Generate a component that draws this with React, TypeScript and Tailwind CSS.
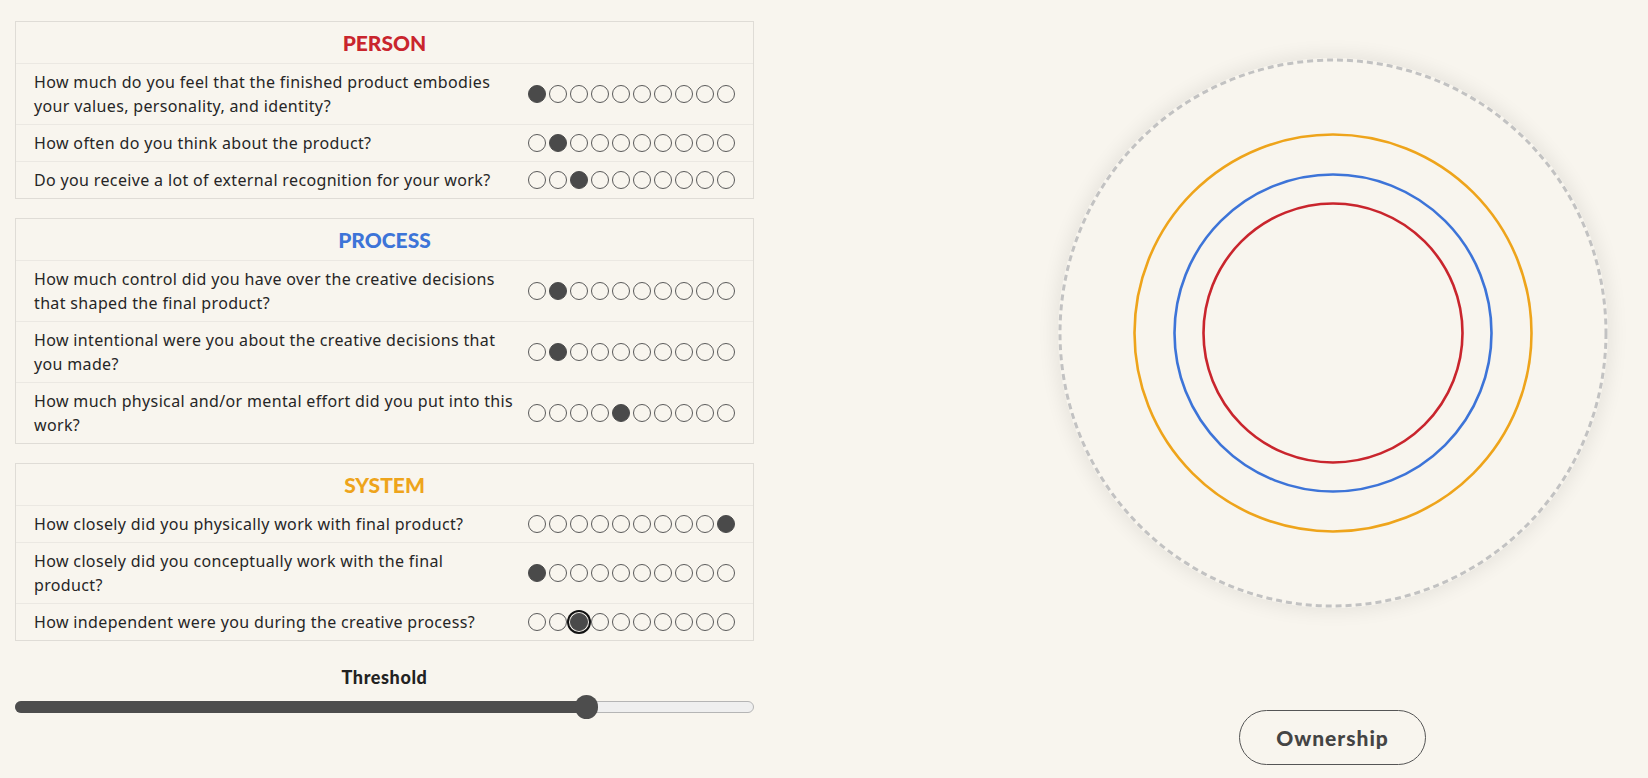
import React from "react";

type Question = { text: string; value: number; focused?: boolean };
type Section = { title: string; color: string; questions: Question[] };

const sections: Section[] = [
  {
    title: "PERSON",
    color: "text-[#c9252d]",
    questions: [
      {
        text: "How much do you feel that the finished product embodies your values, personality, and identity?",
        value: 1,
      },
      { text: "How often do you think about the product?", value: 2 },
      { text: "Do you receive a lot of external recognition for your work?", value: 3 },
    ],
  },
  {
    title: "PROCESS",
    color: "text-[#3d74d8]",
    questions: [
      {
        text: "How much control did you have over the creative decisions that shaped the final product?",
        value: 2,
      },
      { text: "How intentional were you about the creative decisions that you made?", value: 2 },
      { text: "How much physical and/or mental effort did you put into this work?", value: 5 },
    ],
  },
  {
    title: "SYSTEM",
    color: "text-[#eea41b]",
    questions: [
      { text: "How closely did you physically work with final product?", value: 10 },
      { text: "How closely did you conceptually work with the final product?", value: 1 },
      { text: "How independent were you during the creative process?", value: 3, focused: true },
    ],
  },
];

const Scale = ({ value, focused }: { value: number; focused?: boolean }) => (
  <div className="flex gap-[3px] shrink-0">
    {Array.from({ length: 10 }, (_, i) => {
      const on = i + 1 === value;
      return (
        <span
          key={i}
          className={
            on
              ? focused
                ? "w-[18px] h-[18px] rounded-full bg-[#4a4a4a] border border-[#4a4a4a] shadow-[0_0_0_1px_#f5f2ec,0_0_0_3px_#111]"
                : "w-[18px] h-[18px] rounded-full bg-[#4a4a4a] border border-[#4a4a4a]"
              : "w-[18px] h-[18px] rounded-full border-[1.3px] border-[#5a5a5a]"
          }
        />
      );
    })}
  </div>
);

const SectionCard = ({ section }: { section: Section }) => (
  <div className="border border-[#dfdcd6] bg-[#f8f5ee]">
    <div
      className={`text-center font-black text-[21px] leading-[27px] py-[7px] border-b border-[#ebe8e2] ${section.color}`}
    >
      {section.title}
    </div>
    {section.questions.map((q, i) => (
      <div
        key={i}
        className={`flex items-center px-[18px] py-[6px] ${i < 2 ? "border-b border-[#ebe8e2]" : ""}`}
      >
        <p className="w-[480px] font-['Noto_Sans',sans-serif] text-[16px] leading-[24px] tracking-[0.35px] text-[#262626]">
          {q.text}
        </p>
        <div className="ml-auto">
          <Scale value={q.value} focused={q.focused} />
        </div>
      </div>
    ))}
  </div>
);

const threshold = 77.4;

export default function App() {
  return (
    <div className="min-h-screen bg-[#f8f5ee] flex font-['Lato','Noto_Sans',sans-serif]">
      <div className="w-[754px] shrink-0 pl-[15px] pt-[21px]">
        <div className="flex flex-col gap-[19px]">
          {sections.map((s) => (
            <SectionCard key={s.title} section={s} />
          ))}
        </div>
        <div className="mt-[24px] text-center font-black text-[18px] leading-[24px] tracking-[0.6px] text-[#222]">
          Threshold
        </div>
        <div className="relative mt-[6px] h-[24px] flex items-center">
          <div className="relative w-full h-[12px] rounded-full bg-[#efefef] border border-[#b5b5b5]">
            <div
              className="absolute left-[-1px] top-[-1px] h-[12px] rounded-full bg-[#4d4d4d]"
              style={{ width: `${threshold}%` }}
            />
          </div>
          <div
            className="absolute top-0 w-[23px] h-[24px] -ml-[11.5px] rounded-full bg-[#4d4d4d]"
            style={{ left: `${threshold}%` }}
          />
        </div>
      </div>
      <div className="flex-1 pl-[263px] pt-[58px] flex flex-col items-center">
        <div className="w-[550px] h-[550px] rounded-full shadow-[0_0_18px_4px_rgba(0,0,0,0.07)]">
          <svg width="550" height="550" viewBox="0 0 550 550">
            <circle cx="275" cy="275" r="273" fill="none" stroke="#c2c2c2" strokeWidth="3" strokeDasharray="6 4" />
            <circle cx="275" cy="275" r="198.5" fill="none" stroke="#eea41b" strokeWidth="2.6" />
            <circle cx="275" cy="275" r="158.5" fill="none" stroke="#3d74d8" strokeWidth="2.6" />
            <circle cx="275" cy="275" r="129.5" fill="none" stroke="#c9252d" strokeWidth="2.6" />
          </svg>
        </div>
        <button className="mt-[102px] w-[187px] h-[55px] rounded-full border border-[#555] text-[21px] font-black text-[#444] tracking-[1px]">
          Ownership
        </button>
      </div>
    </div>
  );
}
